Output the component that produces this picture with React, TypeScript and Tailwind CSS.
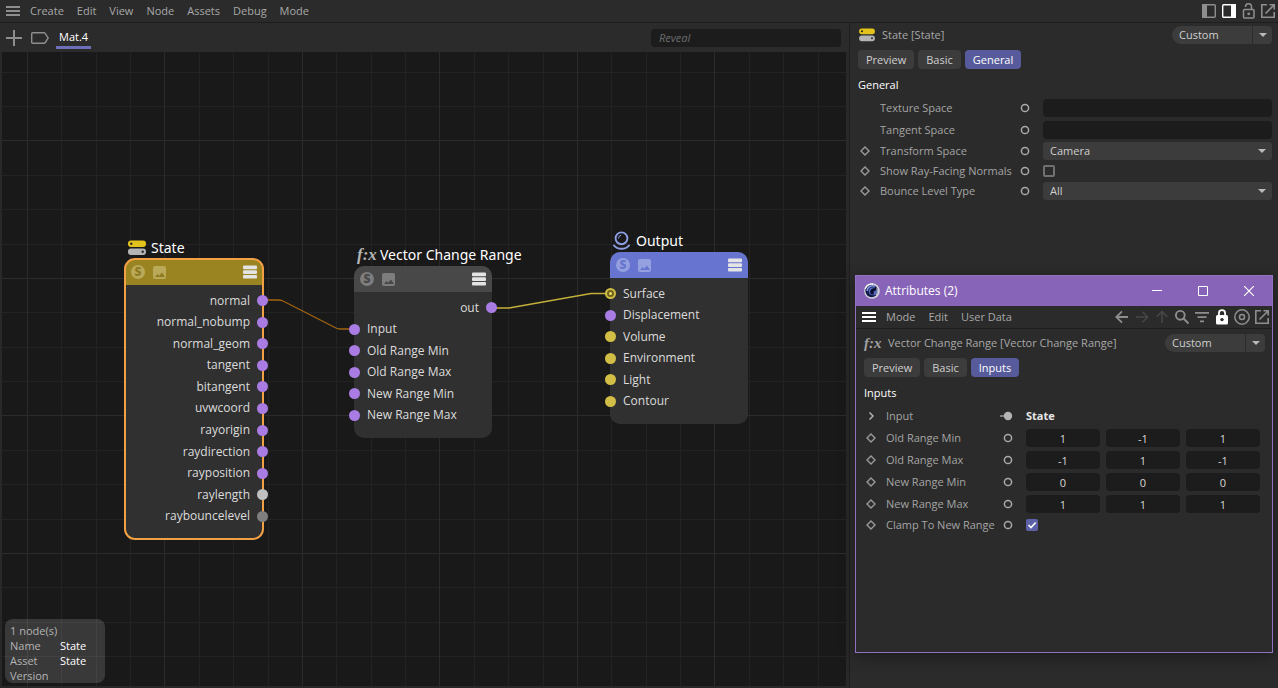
import type { ReactNode } from 'react';

type PortColor = 'vector' | 'material' | 'float' | 'int';

interface Port {
  name: string;
  color: PortColor;
  side: 'in' | 'out';
  linked?: boolean;
}

const portFill: Record<PortColor, string> = {
  vector: 'bg-[#a97ce3]',
  material: 'bg-[#d2be46]',
  float: 'bg-[#c0c0c0]',
  int: 'bg-[#7f7f7f]',
};

const statePorts: Port[] = [
  { name: 'normal', color: 'vector', side: 'out' },
  { name: 'normal_nobump', color: 'vector', side: 'out' },
  { name: 'normal_geom', color: 'vector', side: 'out' },
  { name: 'tangent', color: 'vector', side: 'out' },
  { name: 'bitangent', color: 'vector', side: 'out' },
  { name: 'uvwcoord', color: 'vector', side: 'out' },
  { name: 'rayorigin', color: 'vector', side: 'out' },
  { name: 'raydirection', color: 'vector', side: 'out' },
  { name: 'rayposition', color: 'vector', side: 'out' },
  { name: 'raylength', color: 'float', side: 'out' },
  { name: 'raybouncelevel', color: 'int', side: 'out' },
];

const rangePorts: Port[] = [
  { name: 'out', color: 'vector', side: 'out' },
  { name: 'Input', color: 'vector', side: 'in' },
  { name: 'Old Range Min', color: 'vector', side: 'in' },
  { name: 'Old Range Max', color: 'vector', side: 'in' },
  { name: 'New Range Min', color: 'vector', side: 'in' },
  { name: 'New Range Max', color: 'vector', side: 'in' },
];

const outputPorts: Port[] = [
  { name: 'Surface', color: 'material', side: 'in', linked: true },
  { name: 'Displacement', color: 'vector', side: 'in' },
  { name: 'Volume', color: 'material', side: 'in' },
  { name: 'Environment', color: 'material', side: 'in' },
  { name: 'Light', color: 'material', side: 'in' },
  { name: 'Contour', color: 'material', side: 'in' },
];

const ranges = [
  { name: 'Old Range Min', values: ['1', '-1', '1'] },
  { name: 'Old Range Max', values: ['-1', '1', '-1'] },
  { name: 'New Range Min', values: ['0', '0', '0'] },
  { name: 'New Range Max', values: ['1', '1', '1'] },
];

/* ---------- icons ---------- */

function Burger() {
  return (
    <svg width="14" height="12" viewBox="0 0 14 12" fill="currentColor">
      <path d="M0 1h14v2H0zM0 5h14v2H0zM0 9h14v2H0z" />
    </svg>
  );
}

function StateIcon({ className }: { className: string }) {
  return (
    <svg className={className} viewBox="0 0 18 16">
      <rect x="0" y="0.5" width="18" height="6.5" rx="3" fill="#e3c21c" />
      <circle cx="3.3" cy="3.7" r="1.2" fill="#2b2b2b" />
      <rect x="0" y="8.5" width="18" height="6.5" rx="3" fill="#b4b4b4" />
      <circle cx="14.7" cy="11.7" r="1.2" fill="#2b2b2b" />
    </svg>
  );
}

function FxIcon({ className }: { className: string }) {
  return <span className={`font-['Liberation_Serif',serif] font-bold italic ${className}`}>f:x</span>;
}

function SphereIcon() {
  return (
    <svg width="17" height="20" viewBox="0 0 17 20" fill="none" stroke="#8e9fe6">
      <circle cx="8.5" cy="7.3" r="5.9" strokeWidth="1.9" />
      <path d="M5.5 7.5a3.2 3.2 0 0 1 2.6-3.2" strokeWidth="1" />
      <path d="M1 14.5c3.5 4.4 11.5 4.4 15 0" strokeWidth="2" strokeLinecap="round" />
    </svg>
  );
}

function AppLogo() {
  return (
    <svg width="16" height="16" viewBox="0 0 16 16">
      <circle cx="8" cy="8" r="7.8" fill="#d4d6dc" />
      <circle cx="7.6" cy="8" r="6.2" fill="#141a48" />
      <path d="M11 3.4A5.3 5.3 0 0 0 3.2 8" fill="none" stroke="#8a9ae0" strokeWidth="1.6" />
      <circle cx="8.8" cy="8.2" r="4" fill="#5468c4" />
      <path d="M6.2 9.2c0-3 2.2-4.2 6.4-4.2v2.2L10 8l-.6 3.4c-1.8.4-3.2-.4-3.2-2.2z" fill="#0a0d2c" />
      <path d="M12.6 5.4A5.6 5.6 0 0 1 12 12" fill="none" stroke="#a4aabf" strokeWidth="1.4" />
      <path d="M1.2 6A7 7 0 0 1 9 1.1" fill="none" stroke="#fff" strokeWidth="1.2" />
    </svg>
  );
}

function OpenIcon() {
  return (
    <svg width="20" height="20" viewBox="0 0 20 20" fill="none" stroke="currentColor" strokeWidth="1.6">
      <path d="M9 3.8H3.8v12.4h12.4V11" />
      <path d="M7.5 12.5l8.2-8.2M11.5 3.8h4.7v4.7" />
    </svg>
  );
}

function Diamond() {
  return (
    <svg width="14" height="12" viewBox="0 0 14 12" fill="none" stroke="#9a9a9a" strokeWidth="1.4">
      <path d="M7 2l4 4-4 4-4-4z" />
    </svg>
  );
}

function Ring() {
  return (
    <svg width="14" height="12" viewBox="0 0 14 12" fill="none" stroke="#aaaaaa" strokeWidth="1.5">
      <circle cx="7" cy="6" r="3.6" />
    </svg>
  );
}

function LinkedRing() {
  return (
    <svg className="-ml-2" width="22" height="12" viewBox="0 0 22 12">
      <path d="M7 6h5" stroke="#9a9a9a" strokeWidth="1.5" />
      <circle cx="15" cy="6" r="4.2" fill="#b4b4b4" />
    </svg>
  );
}

function Caret() {
  return (
    <svg width="8" height="4" viewBox="0 0 8 4" fill="#b8b8b8">
      <path d="M0 0h8L4 4z" />
    </svg>
  );
}

/* ---------- node canvas ---------- */

const gridSteps = [34, 69, 103, 172, 206, 241];

function CanvasGrid() {
  return (
    <svg className="absolute inset-0 h-full w-full">
      <defs>
        <pattern id="grid" x="25" y="-49" width="275" height="275" patternUnits="userSpaceOnUse">
          {gridSteps.map((s) => (
            <path key={s} d={`M${s} 0h1v275h-1zM0 ${s}h275v1H0z`} fill="#232323" />
          ))}
          {[0, 137].map((s) => (
            <path key={s} d={`M${s} 0h1v275h-1zM0 ${s}h275v1H0z`} fill="#2b2b2b" />
          ))}
        </pattern>
      </defs>
      <rect width="100%" height="100%" fill="url(#grid)" />
      <path d="M261 248h15q3 0 5 1l51 26q3 2 6 2h14" fill="none" stroke="#a0640f" strokeWidth="1.3" />
      <path d="M490 256h17l82-14.5h18" fill="none" stroke="#c4b03a" strokeWidth="1.3" />
    </svg>
  );
}

interface NodeProps {
  title: string;
  icon: ReactNode;
  ports: Port[];
  place: string;
  headerColor: string;
  glyphColor: string;
  letterColor: string;
  rowsHeight: string;
  selected?: boolean;
}

function GraphNode({ title, icon, ports, place, headerColor, glyphColor, letterColor, rowsHeight, selected }: NodeProps) {
  return (
    <section className={`absolute w-[138px] ${place}`}>
      <div className="flex h-[22px] items-center whitespace-nowrap">
        <span className="flex w-[26px] shrink-0 justify-start pl-[3px]">{icon}</span>
        <h3 className="font-['Noto_Sans',sans-serif] text-[14px] leading-5 text-white">{title}</h3>
      </div>
      <div
        className={`rounded-[10px] bg-[#303030] pb-3 ${selected ? 'outline-2 -outline-offset-1 outline-[#f2a044]' : ''}`}
      >
        <div className={`flex h-[26px] items-center rounded-t-[10px] px-1.5 ${headerColor}`}>
          <span className={`flex h-3.5 w-3.5 items-center justify-center rounded-full text-[12px] font-extrabold leading-none ${glyphColor} ${letterColor}`}>
            S
          </span>
          <span className={`ml-2 flex h-[13px] w-[13px] items-end justify-center rounded-[2px] pb-0.5 ${glyphColor} ${letterColor}`}>
            <svg width="10" height="5" viewBox="0 0 10 5" fill="currentColor">
              <path d="M0 5l2.5-3 1.7 1.8L7 .5 10 5z" />
            </svg>
          </span>
          <svg className="ml-auto" width="14" height="14" viewBox="0 0 14 14" fill="#e4e4e4">
            <rect x="0" y="0.5" width="14" height="3.7" rx="1" />
            <rect x="0" y="5.2" width="14" height="3.7" rx="1" />
            <rect x="0" y="9.9" width="14" height="3.7" rx="1" />
          </svg>
        </div>
        <ul className={`relative mt-[5px] grid auto-rows-fr ${rowsHeight}`}>
          {ports.map((p) => (
            <li
              key={p.name}
              className={`flex items-center gap-[7px] text-[12px] leading-4 text-[#dcdcdc] ${
                p.side === 'out' ? '-mr-[5px] flex-row-reverse' : '-ml-[5px]'
              }`}
            >
              <span className={`flex h-[11px] w-[11px] items-center justify-center rounded-full ${portFill[p.color]}`}>
                {p.linked && <i className="h-[7px] w-[7px] rounded-full border-2 border-[#6d631f] bg-[#f0e060]" />}
              </span>
              {p.name}
            </li>
          ))}
        </ul>
      </div>
    </section>
  );
}

function NodeInfo() {
  return (
    <dl className="absolute bottom-[3px] left-[3px] grid h-16 w-[100px] grid-cols-[50px_1fr] content-end rounded-[8px] bg-white/14 pl-[5px] text-[11px] leading-[15px] text-[#b4b4b4]">
      <dt className="col-span-2">1 node(s)</dt>
      <dt>Name</dt>
      <dd className="text-white">State</dd>
      <dt>Asset</dt>
      <dd className="text-white">State</dd>
      <dt>Version</dt>
      <dd />
    </dl>
  );
}

/* ---------- attribute panels ---------- */

interface PanelHeadProps {
  icon: ReactNode;
  title: string;
  tabs: string[];
  active: string;
  id: string;
}

function PanelHead({ icon, title, tabs, active, id }: PanelHeadProps) {
  return (
    <>
      <div className="flex h-6 items-center">
        <span className="flex w-6 shrink-0">{icon}</span>
        <h2 className="text-[11px] text-[#a8a8a8]">{title}</h2>
        <div className="relative ml-auto flex">
          <select
            id={id}
            aria-label="Mode preset"
            className="h-[18px] w-[100px] appearance-none rounded-l-[9px] rounded-r-[4px] bg-[#3c3c3c] pl-[7px] text-[11px] text-[#cfcfcf]"
          >
            <option>Custom</option>
          </select>
          <span className="pointer-events-none absolute inset-y-0 right-0 flex w-5 items-center justify-center border-l border-[#2b2b2b]">
            <Caret />
          </span>
        </div>
      </div>
      <div className="mt-[3px] flex gap-1" role="tablist">
        {tabs.map((t) => (
          <button
            key={t}
            role="tab"
            aria-selected={t === active}
            className={`h-[19px] rounded-[4px] px-2 text-[11px] leading-[19px] ${
              t === active ? 'bg-[#575b9b] text-white' : 'bg-[#3c3c3c] text-[#cfcfcf]'
            }`}
          >
            {t}
          </button>
        ))}
      </div>
      <h3 className="mt-1.5 mb-0.5 text-[11px] font-medium leading-5 text-white">{active}</h3>
    </>
  );
}

interface RowProps {
  label: string;
  htmlFor: string;
  labelWidth: string;
  height: string;
  marker?: ReactNode;
  ring?: ReactNode;
  children: ReactNode;
}

function Row({ label, htmlFor, labelWidth, height, marker, ring = <Ring />, children }: RowProps) {
  return (
    <div className={`flex items-center ${height}`}>
      <span className="w-[22px] shrink-0">{marker}</span>
      <label htmlFor={htmlFor} className={`shrink-0 whitespace-nowrap text-[11px] text-[#a4a4a4] ${labelWidth}`}>
        {label}
      </label>
      <span className="mr-[11px] w-3.5 shrink-0">{ring}</span>
      {children}
    </div>
  );
}

function SelectField({ id, value }: { id: string; value: string }) {
  return (
    <div className="relative flex flex-1">
      <select
        id={id}
        className="h-[18px] w-full appearance-none rounded-[3px] bg-[#3c3c3c] pl-[7px] text-[11px] text-[#cfcfcf]"
      >
        <option>{value}</option>
      </select>
      <span className="pointer-events-none absolute inset-y-0 right-1.5 flex items-center">
        <Caret />
      </span>
    </div>
  );
}

function GeneralPanel() {
  return (
    <aside className="w-[429px] shrink-0 border-l border-[#1e1e1e] pl-2 pr-1.5">
      <PanelHead
        id="state-preset"
        icon={<StateIcon className="ml-px h-3.5 w-4" />}
        title="State [State]"
        tabs={['Preview', 'Basic', 'General']}
        active="General"
      />
      <Row label="Texture Space" htmlFor="texture-space" labelWidth="w-[138px]" height="h-[22px]">
        <input id="texture-space" className="h-[18px] min-w-0 flex-1 rounded-[4px] bg-[#1c1c1c] px-2 text-[11px] text-[#cfcfcf]" />
      </Row>
      <Row label="Tangent Space" htmlFor="tangent-space" labelWidth="w-[138px]" height="h-[22px]">
        <input id="tangent-space" className="h-[18px] min-w-0 flex-1 rounded-[4px] bg-[#1c1c1c] px-2 text-[11px] text-[#cfcfcf]" />
      </Row>
      <Row label="Transform Space" htmlFor="transform-space" labelWidth="w-[138px]" height="h-5" marker={<Diamond />}>
        <SelectField id="transform-space" value="Camera" />
      </Row>
      <Row label="Show Ray-Facing Normals" htmlFor="ray-facing" labelWidth="w-[138px]" height="h-5" marker={<Diamond />}>
        <input
          id="ray-facing"
          type="checkbox"
          className="h-3 w-3 appearance-none rounded-[2px] border-2 border-[#707070]"
        />
      </Row>
      <Row label="Bounce Level Type" htmlFor="bounce-level" labelWidth="w-[138px]" height="h-5" marker={<Diamond />}>
        <SelectField id="bounce-level" value="All" />
      </Row>
    </aside>
  );
}

function AttributesWindow() {
  return (
    <section className="absolute right-[5px] top-[275px] h-[378px] w-[418px] border border-[#9070c0] bg-[#2b2b2b] shadow-[0_4px_14px_rgba(0,0,0,0.35)]">
      <header className="flex h-[30px] items-center bg-[#8764b8] pl-2 text-white">
        <AppLogo />
        <h2 className="ml-[5px] text-[12px]">Attributes (2)</h2>
        <div className="ml-auto flex">
          <button aria-label="Minimize" className="flex h-[30px] w-[46px] items-center justify-center">
            <svg width="10" height="10" viewBox="0 0 10 10">
              <path d="M0 4.5h10" stroke="#fff" />
            </svg>
          </button>
          <button aria-label="Maximize" className="flex h-[30px] w-[46px] items-center justify-center">
            <svg width="10" height="10" viewBox="0 0 10 10">
              <path d="M.5.5h9v9h-9z" fill="none" stroke="#fff" />
            </svg>
          </button>
          <button aria-label="Close" className="flex h-[30px] w-[46px] items-center justify-center">
            <svg width="10" height="10" viewBox="0 0 10 10">
              <path d="M0 0l10 10M10 0L0 10" stroke="#fff" strokeWidth="1.2" />
            </svg>
          </button>
        </div>
      </header>

      <nav className="flex h-[23px] items-center border-b border-[#1e1e1e] pl-1.5 text-[11px] text-[#a8a8a8]">
        <button aria-label="Menu" className="mr-2.5 text-white">
          <Burger />
        </button>
        <div className="flex gap-[13px]">
          <button>Mode</button>
          <button>Edit</button>
          <button>User Data</button>
        </div>
        <div className="ml-auto flex text-[#8e8e8e]">
          <button aria-label="Back">
            <svg width="20" height="20" viewBox="0 0 20 20" fill="none" stroke="currentColor" strokeWidth="1.8">
              <path d="M16 10H4.5M10 4.3L4.3 10l5.7 5.7" />
            </svg>
          </button>
          <button aria-label="Forward" className="text-[#474747]">
            <svg width="20" height="20" viewBox="0 0 20 20" fill="none" stroke="currentColor" strokeWidth="1.6">
              <path d="M4 10h11.5M10.5 4.8l5.2 5.2-5.2 5.2" />
            </svg>
          </button>
          <button aria-label="Up" className="text-[#474747]">
            <svg width="20" height="20" viewBox="0 0 20 20" fill="none" stroke="currentColor" strokeWidth="1.6">
              <path d="M10 16V4.5M4.8 9.7L10 4.5l5.2 5.2" />
            </svg>
          </button>
          <button aria-label="Search">
            <svg width="20" height="20" viewBox="0 0 20 20" fill="none" stroke="currentColor" strokeWidth="1.9">
              <circle cx="8.3" cy="8.3" r="4.4" />
              <path d="M11.5 11.5l5 5" />
            </svg>
          </button>
          <button aria-label="Filter">
            <svg width="20" height="20" viewBox="0 0 20 20" fill="currentColor">
              <path d="M3 5h14v1.800H3zM5.500 9.200h9V11h-9zM8 13.400h4v1.800H8z" />
            </svg>
          </button>
          <button aria-label="Lock" className="text-white">
            <svg width="20" height="20" viewBox="0 0 20 20" fill="none">
              <path d="M6.9 9V6.2a3.1 3.1 0 0 1 6.2 0V9" stroke="currentColor" strokeWidth="1.8" />
              <rect x="4" y="8" width="12" height="9.5" rx="1.5" fill="currentColor" />
              <circle cx="10" cy="12.6" r="1.7" fill="#2b2b2b" />
            </svg>
          </button>
          <button aria-label="Target">
            <svg width="20" height="20" viewBox="0 0 20 20" fill="none" stroke="currentColor" strokeWidth="1.5">
              <circle cx="10" cy="10" r="7.2" />
              <circle cx="10" cy="10" r="2.5" />
            </svg>
          </button>
          <button aria-label="New window">
            <OpenIcon />
          </button>
        </div>
      </nav>

      <div className="pl-2 pr-[7px] pt-0.5">
        <PanelHead
          id="range-preset"
          icon={<FxIcon className="text-[15px] leading-5 text-[#a0a0a0]" />}
          title="Vector Change Range [Vector Change Range]"
          tabs={['Preview', 'Basic', 'Inputs']}
          active="Inputs"
        />
        <div className="pr-[5px]">
          <Row
            label="Input"
            htmlFor="input-source"
            labelWidth="w-[115px]"
            height="h-[22px]"
            marker={
              <svg width="14" height="12" viewBox="0 0 14 12" fill="none" stroke="#b0b0b0" strokeWidth="1.5">
                <path d="M5.5 2.5L9 6l-3.5 3.5" />
              </svg>
            }
            ring={<LinkedRing />}
          >
            <output id="input-source" className="text-[11px] font-bold text-[#e6e6e6]">
              State
            </output>
          </Row>
          {ranges.map((r) => (
            <Row key={r.name} label={r.name} htmlFor={`${r.name}-0`} labelWidth="w-[115px]" height="h-[22px]" marker={<Diamond />}>
              <div className="flex flex-1 gap-1.5">
                {r.values.map((v, i) => (
                  <input
                    key={i}
                    id={`${r.name}-${i}`}
                    aria-label={`${r.name} ${i + 1}`}
                    defaultValue={v}
                    className="h-[18px] w-0 flex-1 rounded-[4px] bg-[#1c1c1c] text-center text-[11px] text-[#d8d8d8]"
                  />
                ))}
              </div>
            </Row>
          ))}
          <Row label="Clamp To New Range" htmlFor="clamp" labelWidth="w-[115px]" height="h-5" marker={<Diamond />}>
            <span className="relative flex">
              <input id="clamp" type="checkbox" defaultChecked className="h-3 w-3 appearance-none rounded-[2px] bg-[#5d61a8]" />
              <svg className="pointer-events-none absolute inset-0" width="12" height="12" viewBox="0 0 12 12" fill="none">
                <path d="M2.5 6l2.5 2.5L9.7 3.5" stroke="#fff" strokeWidth="1.6" />
              </svg>
            </span>
          </Row>
        </div>
      </div>
    </section>
  );
}

const menus = ['Create', 'Edit', 'View', 'Node', 'Assets', 'Debug', 'Mode'];

export default function App() {
  return (
    <div className="relative flex h-screen flex-col overflow-hidden bg-[#2b2b2b] font-['Open_Sans','Noto_Sans',sans-serif] text-[11px]">
      <nav className="flex h-[23px] shrink-0 items-center border-b border-[#1e1e1e] pl-1.5 text-[#a8a8a8]">
        <button aria-label="Menu" className="mr-2.5 text-[#8e8e8e]">
          <Burger />
        </button>
        <div className="flex gap-[13px]">
          {menus.map((m) => (
            <button key={m}>{m}</button>
          ))}
        </div>
        <div className="ml-auto flex text-[#8e8e8e]">
          <button aria-label="Left sidebar">
            <svg width="20" height="20" viewBox="0 0 20 20">
              <rect x="4.7" y="3.7" width="12.6" height="12.6" rx="1" fill="none" stroke="currentColor" strokeWidth="1.4" />
              <path d="M4 3h5v14H4z" fill="currentColor" />
            </svg>
          </button>
          <button aria-label="Right sidebar" className="text-white">
            <svg width="20" height="20" viewBox="0 0 20 20">
              <rect x="4.7" y="3.7" width="12.6" height="12.6" rx="1" fill="none" stroke="currentColor" strokeWidth="1.4" />
              <path d="M13 3h5v14h-5z" fill="currentColor" />
            </svg>
          </button>
          <button aria-label="Unlock">
            <svg width="20" height="20" viewBox="0 0 20 20" fill="none" stroke="currentColor" strokeWidth="1.5">
              <path d="M7.5 6a3 3 0 0 1 6-.5V8.5" />
              <rect x="5.5" y="8.5" width="10.5" height="8.5" rx="1" />
              <circle cx="10.7" cy="12.8" r="1.4" fill="currentColor" stroke="none" />
            </svg>
          </button>
          <button aria-label="New window">
            <OpenIcon />
          </button>
        </div>
      </nav>

      <div className="flex min-h-0 flex-1">
        <main className="flex min-w-0 flex-1 flex-col">
          <div className="flex h-[29px] shrink-0 items-center pl-1.5 pr-2">
            <button aria-label="Add" className="text-[#8e8e8e]">
              <svg width="16" height="16" viewBox="0 0 16 16">
                <path d="M7 0h2v7h7v2H9v7H7V9H0V7h7z" fill="currentColor" />
              </svg>
            </button>
            <button aria-label="Tag" className="ml-[9px] text-[#8e8e8e]">
              <svg width="18" height="12" viewBox="0 0 18 12" fill="none" stroke="currentColor" strokeWidth="1.4">
                <path d="M.7 1.7q0-1 1-1H13q.8 0 1.300.8L17.200 6l-2.900 4.500q-.5.800-1.300.800H1.700q-1 0-1-1z" />
              </svg>
            </button>
            <button className="ml-[7px] mb-[3px] h-[21px] self-end border-b-3 border-[#6e6fb9] px-[3px] leading-[18px] text-white">
              Mat.4
            </button>
            <input
              aria-label="Reveal"
              placeholder="Reveal"
              className="ml-auto h-[18px] w-[190px] rounded-[4px] bg-[#1c1c1c] px-2 italic placeholder:text-[#6c6c6c]"
            />
          </div>

          <div className="relative min-h-0 flex-1 overflow-hidden border-b-2 border-l-2 border-r-3 border-[#282828] bg-[#191919]">
            <CanvasGrid />
            <GraphNode
              title="State"
              icon={<StateIcon className="h-4 w-[18px]" />}
              ports={statePorts}
              place="left-[123px] top-[185px]"
              headerColor="bg-[#9a8421]"
              glyphColor="bg-[#bba95a]"
              letterColor="text-[#8f7b1f]"
              rowsHeight="h-[237px]"
              selected
            />
            <GraphNode
              title="Vector Change Range"
              icon={<FxIcon className="text-[17px] leading-5 text-[#b4b4b4]" />}
              ports={rangePorts}
              place="left-[352px] top-[192px]"
              headerColor="bg-[#484848]"
              glyphColor="bg-[#7d7d7d]"
              letterColor="text-[#484848]"
              rowsHeight="h-[129px]"
            />
            <GraphNode
              title="Output"
              icon={<SphereIcon />}
              ports={outputPorts}
              place="left-[608px] top-[178px]"
              headerColor="bg-[#6775d0]"
              glyphColor="bg-[#95a0df]"
              letterColor="text-[#6775d0]"
              rowsHeight="h-[129px]"
            />
            <NodeInfo />
          </div>
        </main>

        <GeneralPanel />
      </div>

      <AttributesWindow />
    </div>
  );
}
